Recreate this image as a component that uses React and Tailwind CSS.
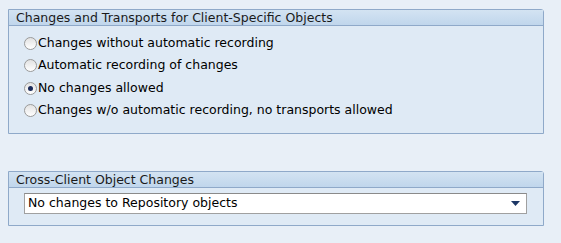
import React from "react";

function Radio({ checked, label }) {
  return (
    <div className="flex items-center h-[22.5px]">
      <span className="w-[13px] h-[13px] rounded-full border border-[#9a9a9a] bg-gradient-to-b from-[#e2e2e2] to-white flex items-center justify-center mr-[1px]">
        {checked && <span className="w-[5px] h-[5px] rounded-full bg-[#1a2a5a]" />}
      </span>
      <span>{label}</span>
    </div>
  );
}

function Panel({ title, children, className }) {
  return (
    <div className={"mx-[8px] w-[536px] border border-[#8fa9c9] rounded-tr-[3px] bg-[#dfeaf5] " + (className || "")}>
      <div className="h-[16px] bg-gradient-to-b from-[#d3e3f2] to-[#c0d6ec] border-b border-[#8fa9c9] px-[7px] leading-[16px] text-[#1a1a1a]">
        {title}
      </div>
      {children}
    </div>
  );
}

export default function App() {
  return (
    <div
      className="w-[561px] h-[243px] bg-[#e8eff7] pt-[9px] text-[12.5px] text-black overflow-hidden"
      style={{ fontFamily: '"DejaVu Sans", Verdana, sans-serif' }}
    >
      <Panel title="Changes and Transports for Client-Specific Objects" className="h-[125px]">
        <div className="pl-[15px] pt-[6px]">
          <Radio label="Changes without automatic recording" />
          <Radio label="Automatic recording of changes" />
          <Radio checked label="No changes allowed" />
          <Radio label="Changes w/o automatic recording, no transports allowed" />
        </div>
      </Panel>
      <Panel title="Cross-Client Object Changes" className="mt-[37px] h-[55px]">
        <div className="pl-[15px] pt-[5px]">
          <div className="w-[503px] h-[21px] bg-white border border-[#a0a0a0] border-t-[#8a8a8a] flex items-center justify-between pl-[3px] pr-[6px]">
            <span>No changes to Repository objects</span>
            <svg width="9" height="6" viewBox="0 0 9 6">
              <polygon points="0,0 9,0 4.5,5" fill="#1c3766" />
            </svg>
          </div>
        </div>
      </Panel>
    </div>
  );
}
